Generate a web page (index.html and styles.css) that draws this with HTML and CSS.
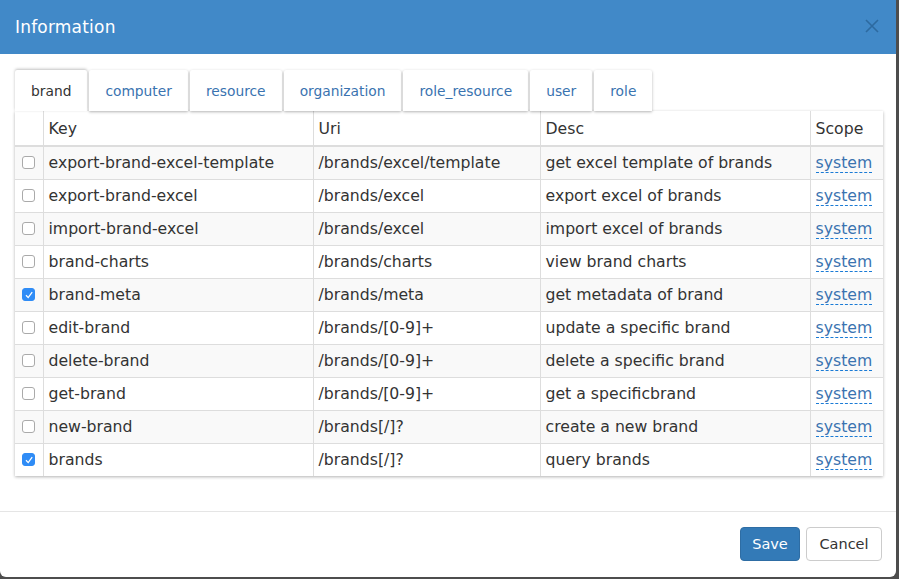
FILE: index.html
```html
<!DOCTYPE html>
<html>
<head>
<meta charset="utf-8">
<link rel="stylesheet" href="styles.css">
</head>
<body>
<div class="modal">
  <div class="modal-header">
    <h4 class="modal-title">Information</h4>
    <span class="close">
      <svg width="14" height="14" viewBox="0 0 14 14"><path d="M1 1L13 13M13 1L1 13" stroke="#2d6aa0" stroke-width="1.6" fill="none"/></svg>
    </span>
  </div>
  <div class="modal-body">
    <ul class="tabs">
      <li class="tab active">brand</li>
      <li class="tab">computer</li>
      <li class="tab">resource</li>
      <li class="tab">organization</li>
      <li class="tab">role_resource</li>
      <li class="tab">user</li>
      <li class="tab">role</li>
    </ul>
    <table class="grid">
      <colgroup>
        <col class="c-check"><col class="c-key"><col class="c-uri"><col class="c-desc"><col class="c-scope">
      </colgroup>
      <thead>
        <tr><th></th><th>Key</th><th>Uri</th><th>Desc</th><th>Scope</th></tr>
      </thead>
      <tbody>
        <tr><td><span class="cb"></span></td><td>export-brand-excel-template</td><td>/brands/excel/template</td><td>get excel template of brands</td><td><a class="scope">system</a></td></tr>
        <tr><td><span class="cb"></span></td><td>export-brand-excel</td><td>/brands/excel</td><td>export excel of brands</td><td><a class="scope">system</a></td></tr>
        <tr><td><span class="cb"></span></td><td>import-brand-excel</td><td>/brands/excel</td><td>import excel of brands</td><td><a class="scope">system</a></td></tr>
        <tr><td><span class="cb"></span></td><td>brand-charts</td><td>/brands/charts</td><td>view brand charts</td><td><a class="scope">system</a></td></tr>
        <tr><td><span class="cb on"><svg width="10" height="10" viewBox="0 0 10 10"><path d="M2 5.2L4.2 7.6L8.2 2.2" stroke="#fff" stroke-width="1.3" fill="none"/></svg></span></td><td>brand-meta</td><td>/brands/meta</td><td>get metadata of brand</td><td><a class="scope">system</a></td></tr>
        <tr><td><span class="cb"></span></td><td>edit-brand</td><td>/brands/[0-9]+</td><td>update a specific brand</td><td><a class="scope">system</a></td></tr>
        <tr><td><span class="cb"></span></td><td>delete-brand</td><td>/brands/[0-9]+</td><td>delete a specific brand</td><td><a class="scope">system</a></td></tr>
        <tr><td><span class="cb"></span></td><td>get-brand</td><td>/brands/[0-9]+</td><td>get a specificbrand</td><td><a class="scope">system</a></td></tr>
        <tr><td><span class="cb"></span></td><td>new-brand</td><td>/brands[/]?</td><td>create a new brand</td><td><a class="scope">system</a></td></tr>
        <tr><td><span class="cb on"><svg width="10" height="10" viewBox="0 0 10 10"><path d="M2 5.2L4.2 7.6L8.2 2.2" stroke="#fff" stroke-width="1.3" fill="none"/></svg></span></td><td>brands</td><td>/brands[/]?</td><td>query brands</td><td><a class="scope">system</a></td></tr>
      </tbody>
    </table>
  </div>
  <div class="modal-footer">
    <button class="btn btn-primary">Save</button>
    <button class="btn btn-default">Cancel</button>
  </div>
</div>
</body>
</html>
```

FILE: styles.css
```css
* { box-sizing: border-box; }
html, body { margin: 0; padding: 0; }
body {
  background: #4d4d4d;
  font-family: "DejaVu Sans", sans-serif;
  color: #333;
  width: 899px;
  height: 579px;
  overflow: hidden;
}
.modal {
  width: 896px;
  height: 577px;
  background: #fff;
  border-radius: 0 0 6px 6px;
  display: flex;
  flex-direction: column;
}
.modal-header {
  background: #4189c8;
  height: 54px;
  padding: 0 20px 0 15px;
  display: flex;
  align-items: center;
  justify-content: space-between;
}
.modal-title {
  margin: 0;
  color: #fff;
  font-weight: normal;
  font-size: 17px;
  letter-spacing: 0.2px;
}
.close { display: flex; margin-top: -2px; margin-right: -3px; }
.modal-body {
  padding: 16px 13px 0 15px;
  height: 458px;
  border-bottom: 1px solid #e5e5e5;
}
.tabs {
  list-style: none;
  margin: 0;
  padding: 0;
  display: flex;
  gap: 2px;
  height: 41px;
}
.tab {
  height: 41px;
  padding: 0 16px;
  display: flex;
  align-items: center;
  font-size: 13.8px;
  color: #3a73b0;
  background: #fff;
  box-shadow: 0 1px 3px rgba(0,0,0,0.3);
  border-radius: 2px 2px 0 0;
}
.tab.active { color: #333; box-shadow: 0 -1px 3px rgba(0,0,0,0.25); }
.grid {
  width: 868px;
  border-collapse: collapse;
  table-layout: fixed;
  box-shadow: 0 1px 3px rgba(0,0,0,0.3);
  font-size: 15.7px;
}
.c-check { width: 28px; }
.c-key { width: 270px; }
.c-uri { width: 227px; }
.c-desc { width: 270px; }
.c-scope { width: 73px; }
.grid th, .grid td {
  border-left: 1px solid #ddd;
  text-align: left;
  font-weight: normal;
  padding: 0 5px;
  white-space: nowrap;
  overflow: hidden;
}
.grid th:first-child, .grid td:first-child { border-left: none; padding: 0 0 0 7px; }
.grid th { height: 35px; border-bottom: 2px solid #ddd; }
.grid td { height: 33px; border-top: 1px solid #ddd; }
.grid tbody tr:first-child td { border-top: none; }
.grid tbody tr:nth-child(odd) td { background: #f9f9f9; }
.cb {
  display: flex;
  align-items: center;
  justify-content: center;
  width: 13px;
  height: 13px;
  border: 1px solid #aaa;
  border-radius: 3px;
  background: #fff;
}
.cb.on { background: #2f8cf6; border-color: #2f8cf6; }
.scope {
  color: #3a73b0;
  border-bottom: 1px dashed #1a7bd6;
  text-decoration: none;
}
.modal-footer {
  flex: 1;
  display: flex;
  justify-content: flex-end;
  align-items: flex-start;
  padding: 15px 14px 0 0;
  gap: 6px;
}
.btn {
  font-family: "DejaVu Sans", sans-serif;
  font-size: 14.5px;
  height: 34px;
  border-radius: 4px;
  padding: 0 10px;
}
.btn-primary { background: #337ab7; color: #fff; border: 1px solid #2e6da4; width: 60px; }
.btn-default { background: #fff; color: #333; border: 1px solid #ccc; width: 76px; }
```
